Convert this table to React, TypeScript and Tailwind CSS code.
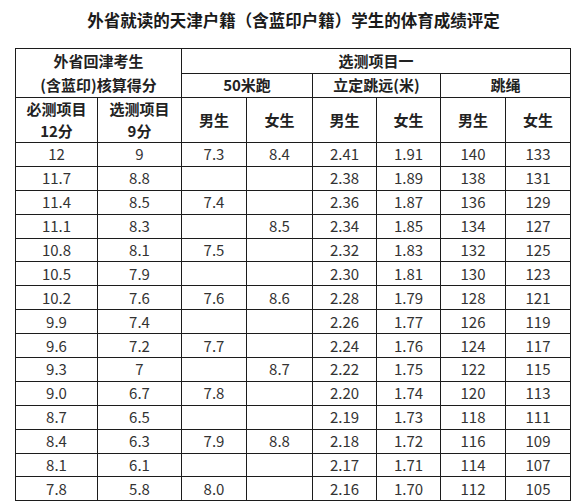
import React from "react";

const rows: string[][] = [
  ["12", "9", "7.3", "8.4", "2.41", "1.91", "140", "133"],
  ["11.7", "8.8", "", "", "2.38", "1.89", "138", "131"],
  ["11.4", "8.5", "7.4", "", "2.36", "1.87", "136", "129"],
  ["11.1", "8.3", "", "8.5", "2.34", "1.85", "134", "127"],
  ["10.8", "8.1", "7.5", "", "2.32", "1.83", "132", "125"],
  ["10.5", "7.9", "", "", "2.30", "1.81", "130", "123"],
  ["10.2", "7.6", "7.6", "8.6", "2.28", "1.79", "128", "121"],
  ["9.9", "7.4", "", "", "2.26", "1.77", "126", "119"],
  ["9.6", "7.2", "7.7", "", "2.24", "1.76", "124", "117"],
  ["9.3", "7", "", "8.7", "2.22", "1.75", "122", "115"],
  ["9.0", "6.7", "7.8", "", "2.20", "1.74", "120", "113"],
  ["8.7", "6.5", "", "", "2.19", "1.73", "118", "111"],
  ["8.4", "6.3", "7.9", "8.8", "2.18", "1.72", "116", "109"],
  ["8.1", "6.1", "", "", "2.17", "1.71", "114", "107"],
  ["7.8", "5.8", "8.0", "", "2.16", "1.70", "112", "105"],
];

const widths = [82, 84, 65, 66, 64, 64, 65, 65];

export default function App() {
  const th = "border border-[#1c1c1c] font-bold text-[15px] text-[#222] text-center align-middle p-0";
  return (
    <div
      className="w-[587px] h-[504px] bg-white overflow-hidden"
      style={{ fontFamily: '"Noto Sans CJK SC", "Noto Sans", sans-serif' }}
    >
      <div className="h-[48px] flex items-start justify-center pt-[8px]">
        <h1 className="text-[16.5px] leading-[24px] font-bold text-[#1a1a1a]">
          外省就读的天津户籍（含蓝印户籍）学生的体育成绩评定
        </h1>
      </div>
      <table className="ml-[15px] w-[555px] table-fixed border-collapse">
        <colgroup>
          {widths.map((w, i) => (
            <col key={i} style={{ width: w }} />
          ))}
        </colgroup>
        <thead>
          <tr className="h-[24px]">
            <th colSpan={2} rowSpan={2} className={`${th} leading-[24px]`}>
              <div>外省回津考生</div>
              <div>(含蓝印)核算得分</div>
            </th>
            <th colSpan={6} className={`${th} leading-[22px]`}>选测项目一</th>
          </tr>
          <tr className="h-[24px]">
            <th colSpan={2} className={`${th} leading-[22px]`}>50米跑</th>
            <th colSpan={2} className={`${th} leading-[22px]`}>立定跳远(米)</th>
            <th colSpan={2} className={`${th} leading-[22px]`}>跳绳</th>
          </tr>
          <tr className="h-[45px]">
            <th className={`${th} leading-[22px]`}>
              <div>必测项目</div>
              <div>12分</div>
            </th>
            <th className={`${th} leading-[22px]`}>
              <div>选测项目</div>
              <div>9分</div>
            </th>
            <th className={th}>男生</th>
            <th className={th}>女生</th>
            <th className={th}>男生</th>
            <th className={th}>女生</th>
            <th className={th}>男生</th>
            <th className={th}>女生</th>
          </tr>
        </thead>
        <tbody>
          {rows.map((r, i) => (
            <tr key={i} className="h-[23.9px]">
              {r.map((c, j) => (
                <td
                  key={j}
                  className="border border-[#1c1c1c] text-center align-middle p-0 text-[15px] leading-[22px] text-[#333]"
                >
                  {c}
                </td>
              ))}
            </tr>
          ))}
        </tbody>
      </table>
    </div>
  );
}
